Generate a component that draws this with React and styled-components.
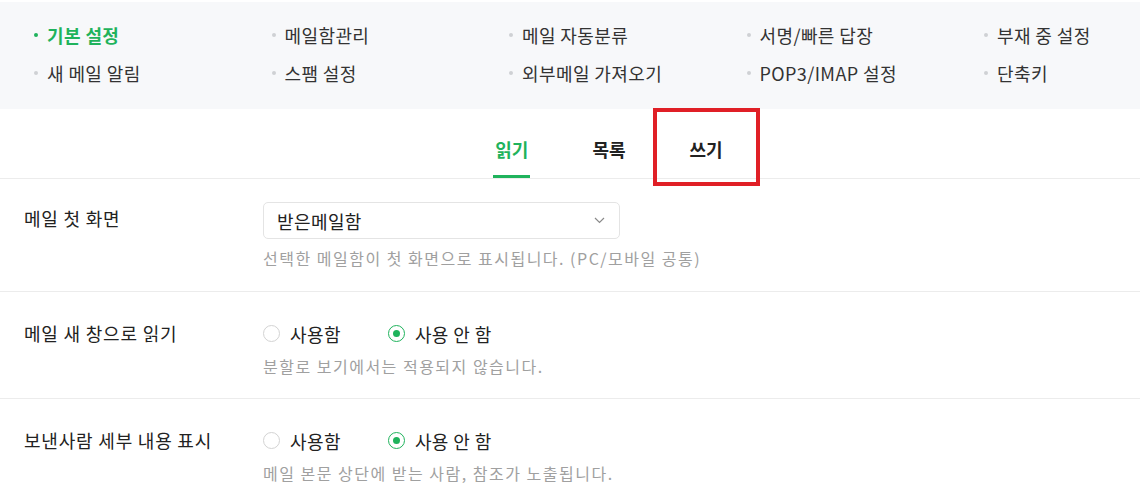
import styled, { createGlobalStyle } from "styled-components"

const GlobalStyle = createGlobalStyle`
body{
    margin: 0;
    background: #fff;
    overflow: hidden;
    font-family: "Noto Sans CJK KR", "Noto Sans", sans-serif;
    color: #222;
}
`

const menu = [
    "기본 설정", "메일함관리", "메일 자동분류", "서명/빠른 답장", "부재 중 설정",
    "새 메일 알림", "스팸 설정", "외부메일 가져오기", "POP3/IMAP 설정", "단축키",
]

const tabs = ["읽기", "목록", "쓰기"]

export default function App() {
    return (
        <Page>
            <GlobalStyle />
            <MenuPanel>
                {menu.map((item, i) => (
                    <MenuItem key={item} $active={i === 0}>{item}</MenuItem>
                ))}
            </MenuPanel>
            <TabBar>
                {tabs.map((t, i) => (
                    <Tab key={t} $active={i === 0}>{t}</Tab>
                ))}
                <Highlight />
            </TabBar>
            <Row>
                <Label $lh={33}>메일 첫 화면</Label>
                <Control>
                    <Select>
                        <span>받은메일함</span>
                        <svg width="11" height="7" viewBox="0 0 11 7">
                            <polyline points="1,1 5.5,5.5 10,1" fill="none" stroke="#8a8a8a" strokeWidth="1.2" />
                        </svg>
                    </Select>
                    <Help $gap={9}>선택한 메일함이 첫 화면으로 표시됩니다. (PC/모바일 공통)</Help>
                </Control>
            </Row>
            <Row $last>
                <Label $lh={37}>메일 새 창으로 읽기</Label>
                <Control>
                    <RadioGroup>
                        <Radio><Circle />사용함</Radio>
                        <Radio><Circle $checked />사용 안 함</Radio>
                    </RadioGroup>
                    <Help $gap={4}>분할로 보기에서는 적용되지 않습니다.</Help>
                </Control>
            </Row>
            <Row $last>
                <Label $lh={37}>보낸사람 세부 내용 표시</Label>
                <Control>
                    <RadioGroup>
                        <Radio><Circle />사용함</Radio>
                        <Radio><Circle $checked />사용 안 함</Radio>
                    </RadioGroup>
                    <Help $gap={4}>메일 본문 상단에 받는 사람, 참조가 노출됩니다.</Help>
                </Control>
            </Row>
        </Page>
    )
}

const Page = styled.div`
width: 1218px;
padding-top: 2px;
`
const MenuPanel = styled.div`
background-color: #f7f8fa;
display: grid;
grid-template-columns: repeat(5, 237.5px);
row-gap: 14px;
padding: 21px 0 24px 34px;
`
const MenuItem = styled.div`
display: flex;
align-items: center;
font-size: 18px;
line-height: 24px;
letter-spacing: 0.4px;
white-space: nowrap;
color: ${p => p.$active ? "#1fb35c" : "#333"};
font-weight: ${p => p.$active ? 700 : 400};
&::before{
    content: "";
    width: 4px;
    height: 4px;
    border-radius: 50%;
    margin-right: 9px;
    background-color: ${p => p.$active ? "#1fb35c" : "#cfd1d4"};
}
`
const TabBar = styled.div`
position: relative;
display: flex;
justify-content: center;
gap: 60px;
height: 69px;
border-bottom: 1px solid #ececec;
`
const Tab = styled.div`
box-sizing: border-box;
height: 69px;
padding: 28px 2px 0;
font-size: 18px;
line-height: 24px;
font-weight: 700;
color: ${p => p.$active ? "#1fb35c" : "#222"};
border-bottom: 3px solid ${p => p.$active ? "#1fb35c" : "transparent"};
`
const Highlight = styled.div`
position: absolute;
left: 653px;
top: -1px;
width: 99px;
height: 70px;
border: 4px solid #e01f26;
`
const Row = styled.div`
display: flex;
padding: 23px 24px ${p => p.$last ? "22px" : "23px"};
border-bottom: 1px solid #ececec;
`
const Label = styled.div`
width: 239px;
flex-shrink: 0;
font-size: 18px;
line-height: ${p => p.$lh}px;
letter-spacing: 0.8px;
color: #222;
`
const Control = styled.div`
display: flex;
flex-direction: column;
`
const Select = styled.div`
box-sizing: border-box;
width: 357px;
height: 37px;
display: flex;
align-items: center;
justify-content: space-between;
padding: 0 14px 0 13px;
border: 1px solid #e4e4e4;
border-radius: 5px;
font-size: 18px;
letter-spacing: 0.4px;
color: #222;
`
const Help = styled.div`
margin-top: ${p => p.$gap}px;
font-size: 16px;
line-height: 20px;
letter-spacing: 1.5px;
color: #a0a0a0;
`
const RadioGroup = styled.div`
display: flex;
align-items: center;
height: 37px;
gap: 47px;
`
const Radio = styled.label`
display: flex;
align-items: center;
gap: 10px;
font-size: 18px;
letter-spacing: 0.4px;
color: #222;
`
const Circle = styled.span`
box-sizing: border-box;
width: 17px;
height: 17px;
border-radius: 50%;
border: 1px solid ${p => p.$checked ? "#1fb35c" : "#d3d3d3"};
background: #fff;
display: flex;
align-items: center;
justify-content: center;
&::after{
    content: "";
    display: ${p => p.$checked ? "block" : "none"};
    width: 7px;
    height: 7px;
    border-radius: 50%;
    background: #1fb35c;
}
`
